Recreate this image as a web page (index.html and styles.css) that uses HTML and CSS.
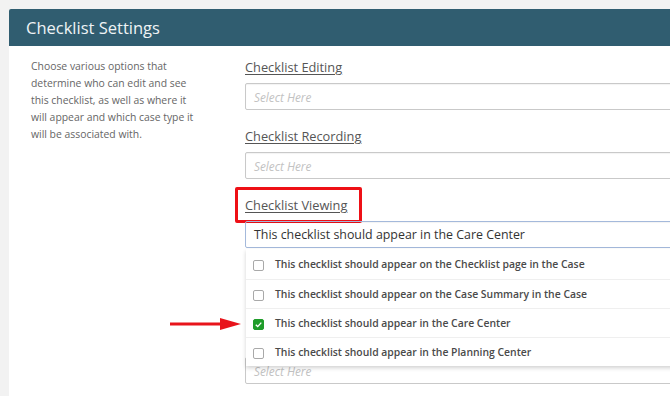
FILE: index.html
```html
<!DOCTYPE html>
<html lang="en">
<head>
  <meta charset="UTF-8">
  <meta name="viewport" content="width=device-width, initial-scale=1.0">
  <title>Checklist Settings</title>
  <link rel="stylesheet" href="styles.css">
</head>
<body>
  <div id="page">
    <section class="panel">
      <header class="panel-head">Checklist Settings</header>
      <div class="panel-body">
        <p class="intro">Choose various options that determine who can edit and see this checklist, as well as where it will appear and which case type it will be associated with.</p>

        <div class="fields">
          <div class="field">
            <label class="field-label">Checklist Editing</label>
            <div class="select"><span class="placeholder">Select Here</span></div>
          </div>

          <div class="field">
            <label class="field-label">Checklist Recording</label>
            <div class="select"><span class="placeholder">Select Here</span></div>
          </div>

          <div class="field">
            <div class="label-wrap">
              <label class="field-label">Checklist Viewing</label>
              <span class="highlight"></span>
            </div>
            <div class="select-wrap">
              <div class="select open">This checklist should appear in the Care Center</div>
              <ul class="dropdown">
                <li class="option"><span class="check"></span>This checklist should appear on the Checklist page in the Case</li>
                <li class="option"><span class="check"></span>This checklist should appear on the Case Summary in the Case</li>
                <li class="option">
                  <svg class="arrow" width="72" height="14" viewBox="0 0 72 14">
                    <path d="M0 7 H52" stroke="#e8141b" stroke-width="3"/>
                    <path d="M50 1 L71 7 L50 13 Z" fill="#e8141b"/>
                  </svg>
                  <span class="check checked">
                    <svg width="9" height="9" viewBox="0 0 9 9"><path d="M1.8 4.8 L3.7 6.6 L7.3 2.6" fill="none" stroke="#fff" stroke-width="1.4"/></svg>
                  </span>This checklist should appear in the Care Center
                </li>
                <li class="option"><span class="check"></span>This checklist should appear in the Planning Center</li>
              </ul>
            </div>
          </div>

          <div class="field field-below">
            <div class="select"><span class="placeholder">Select Here</span></div>
          </div>
        </div>
      </div>
    </section>
  </div>
</body>
</html>
```

FILE: styles.css
```css
html, body {
  margin: 0;
  padding: 0;
  overflow: hidden;
}

body {
  background-color: #f2f2f2;
  font-family: "Open Sans", "Liberation Sans", sans-serif;
  color: #555;
}

#page {
  padding: 9px 0 0 9px;
  height: 387px;
  overflow: hidden;
}

.panel {
  width: 720px;
  height: 100%;
  background-color: #fff;
  border-radius: 2px 0 0 0;
}

.panel-head {
  height: 37px;
  background-color: #305d70;
  color: #eef3f5;
  font-size: 16.5px;
  line-height: 37px;
  padding-left: 17px;
  border-radius: 2px 0 0 0;
}

.panel-body {
  display: grid;
  grid-template-columns: 236px 1fr;
  padding-top: 12px;
}

.intro {
  margin: 0;
  padding-left: 22px;
  width: 172px;
  font-size: 10.4px;
  line-height: 17px;
  color: #666;
}

.field {
  margin-bottom: 17px;
}

.field-label {
  display: block;
  width: fit-content;
  font-size: 12.8px;
  line-height: 18px;
  color: #555;
  text-decoration: underline;
  text-underline-offset: 2px;
  margin-bottom: 7px;
}

.label-wrap {
  position: relative;
}

.highlight {
  position: absolute;
  left: -10px;
  top: -9px;
  width: 121px;
  height: 30px;
  border: 3px solid #ee1016;
  border-radius: 2px;
}

.select {
  height: 27px;
  box-sizing: border-box;
  border: 1px solid #c9c9c9;
  border-radius: 2px;
  padding: 0 8px;
  display: flex;
  align-items: center;
  font-size: 12.4px;
  color: #333;
  box-shadow: inset 0 1px 1px rgba(0, 0, 0, 0.05);
}

.select.open {
  border-color: #a4b9db;
}

.placeholder {
  font-style: italic;
  color: #c2c2c2;
  font-size: 11.8px;
}

.select-wrap {
  position: relative;
}

.dropdown {
  position: absolute;
  top: 28px;
  left: 1px;
  right: 0;
  margin: 0;
  padding: 0;
  list-style: none;
  background-color: #fff;
  box-shadow: 0 2px 4px rgba(0, 0, 0, 0.18);
  z-index: 2;
}

.option {
  position: relative;
  height: 29px;
  display: flex;
  align-items: center;
  font-size: 10.4px;
  font-weight: 600;
  color: #4a4a4a;
  border-top: 1px solid #efefef;
  box-sizing: border-box;
}

.option:first-child {
  border-top: none;
  height: 30px;
}

.check {
  width: 11px;
  height: 11px;
  box-sizing: border-box;
  border: 1px solid #a9a9a9;
  border-radius: 2px;
  margin: 2px 11px 0 7px;
  display: flex;
  align-items: center;
  justify-content: center;
  flex-shrink: 0;
}

.check.checked {
  background-color: #1f9c2a;
  border-color: #1f9c2a;
}

.arrow {
  position: absolute;
  right: calc(100% + 4px);
  top: 8px;
}

.field-below {
  margin-top: 109px;
}
```
